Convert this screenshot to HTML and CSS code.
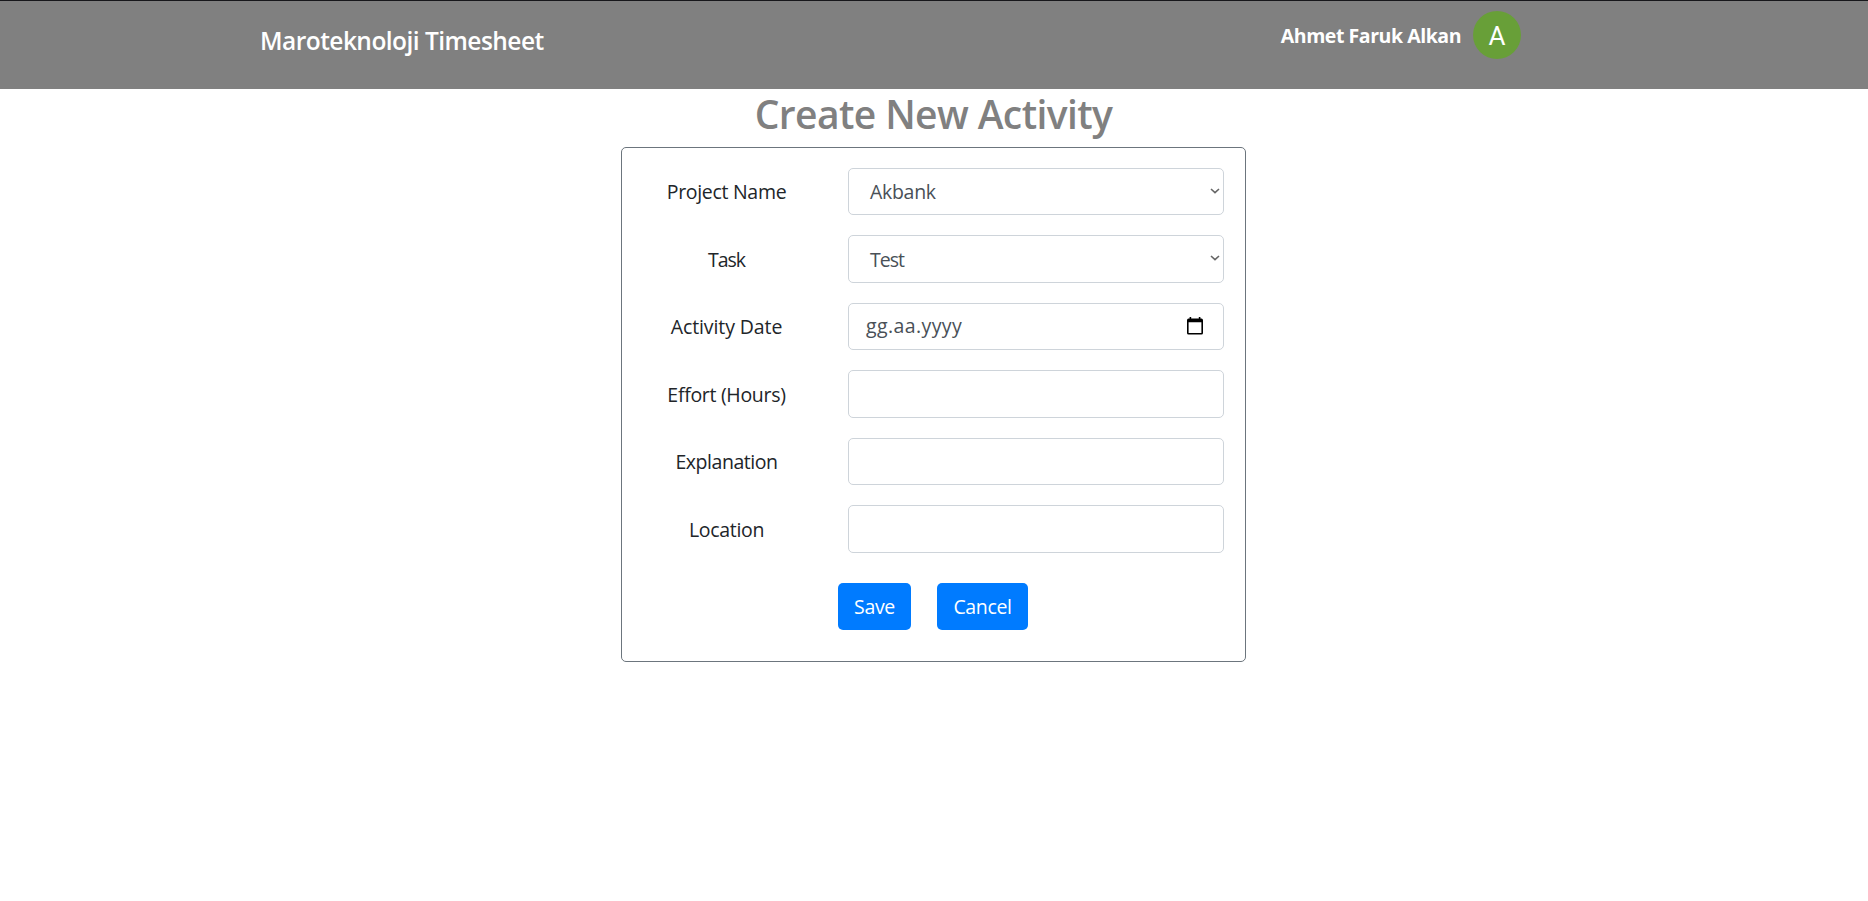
FILE: index.html
```html
<!DOCTYPE html>
<html lang="en">
<head>
<meta charset="utf-8">
<title>Maroteknoloji Timesheet</title>
<link rel="stylesheet" href="styles.css">
</head>
<body>
<header class="navbar">
  <div class="brand">Maroteknoloji Timesheet</div>
  <div class="user">
    <span class="user-name">Ahmet Faruk Alkan</span>
    <span class="avatar">A</span>
  </div>
</header>
<main class="page">
  <h1 class="title">Create New Activity</h1>
  <form class="card">
    <div class="fields">
      <label class="label">Project Name</label>
      <div class="control select">
        <span class="value">Akbank</span>
        <svg class="chevron" width="10" height="6" viewBox="0 0 10 6"><path d="M1 1 L5 4.6 L9 1"/></svg>
      </div>
      <label class="label short">Task</label>
      <div class="control select">
        <span class="value short">Test</span>
        <svg class="chevron" width="10" height="6" viewBox="0 0 10 6"><path d="M1 1 L5 4.6 L9 1"/></svg>
      </div>
      <label class="label wide">Activity Date</label>
      <div class="control date">
        <span>gg.aa.yyyy</span>
        <svg class="calendar" width="16" height="18" viewBox="0 0 16 18"><path fill-rule="evenodd" d="M2.6 0H4.2V1.6H11.8V0H13.4V1.6H14.4Q16 1.6 16 3.2V15.9Q16 17.5 14.4 17.5H1.6Q0 17.5 0 15.9V3.2Q0 1.6 1.6 1.6H2.6ZM1.6 5.2V16H14.4V5.2Z"/></svg>
      </div>
      <label class="label" for="effort">Effort (Hours)</label>
      <input class="control" id="effort" type="text">
      <label class="label tight" for="explanation">Explanation</label>
      <input class="control" id="explanation" type="text">
      <label class="label" for="location">Location</label>
      <input class="control" id="location" type="text">
    </div>
    <div class="actions">
      <button class="btn save" type="button">Save</button>
      <button class="btn cancel" type="button">Cancel</button>
    </div>
  </form>
</main>
</body>
</html>
```
FILE: styles.css
```css
* { box-sizing: border-box; }

body {
  margin: 0;
  background: #fff;
  color: #212529;
  font-family: "Open Sans", sans-serif;
  font-size: 19.5px;
  line-height: 30px;
  letter-spacing: -0.3px;
}

.navbar {
  display: flex;
  justify-content: space-between;
  align-items: flex-start;
  height: 89px;
  padding: 10px 347px 0 260px;
  border-top: 1px solid #17171b;
  background: #808080;
  color: #fff;
}

.brand {
  padding-top: 15px;
  font-size: 24.5px;
  font-weight: 600;
  letter-spacing: -0.54px;
}

.user {
  display: flex;
  align-items: center;
  gap: 12px;
}

.user-name {
  padding-top: 2px;
  font-weight: 700;
  letter-spacing: -0.45px;
}

.avatar {
  width: 48px;
  height: 48px;
  padding-top: 1px;
  border-radius: 50%;
  background: #689f38;
  font: 26px/48px Roboto, sans-serif;
  letter-spacing: 0;
  text-align: center;
}

.page {
  width: 625px;
  margin-left: 621px;
}

.title {
  margin: 0 0 8px;
  color: #808080;
  font-size: 39px;
  font-weight: 600;
  line-height: 50px;
  letter-spacing: -0.6px;
  text-align: center;
}

.card {
  height: 515px;
  padding: 19.6px 21px 0 0;
  border: 1px solid #6c757d;
  border-radius: 5px;
}

.fields {
  display: grid;
  grid-template-columns: 210px 376px;
  grid-auto-rows: 47.5px;
  justify-content: space-between;
  row-gap: 20px;
}

.label {
  align-self: center;
  padding: 2px 1px 0 0;
  text-align: center;
}

.value { padding-top: 2px; }
.short { letter-spacing: -1px; }
.tight { letter-spacing: -0.45px; }
.wide { letter-spacing: -0.1px; }

.control {
  display: flex;
  justify-content: space-between;
  align-items: center;
  width: 100%;
  border: 1px solid #ced4da;
  border-radius: 5px;
  background: #fff;
  color: #495057;
  font: inherit;
}

.select { padding: 0 3px 0 21px; }

.date {
  padding: 0 20px 0 17px;
  letter-spacing: 0.4px;
}

.chevron {
  margin-bottom: 1px;
  fill: none;
  stroke: #666;
  stroke-width: 1.6;
}

.calendar {
  margin-bottom: 1px;
  fill: #000;
}

.actions {
  display: flex;
  gap: 26px;
  margin: 30px 0 0 216px;
}

.btn {
  height: 47px;
  padding: 2px 0 0;
  border: 0;
  border-radius: 5px;
  background: #007bff;
  color: #fff;
  font: inherit;
  letter-spacing: -0.35px;
}

.save { width: 73px; }
.cancel { width: 91px; }
```
